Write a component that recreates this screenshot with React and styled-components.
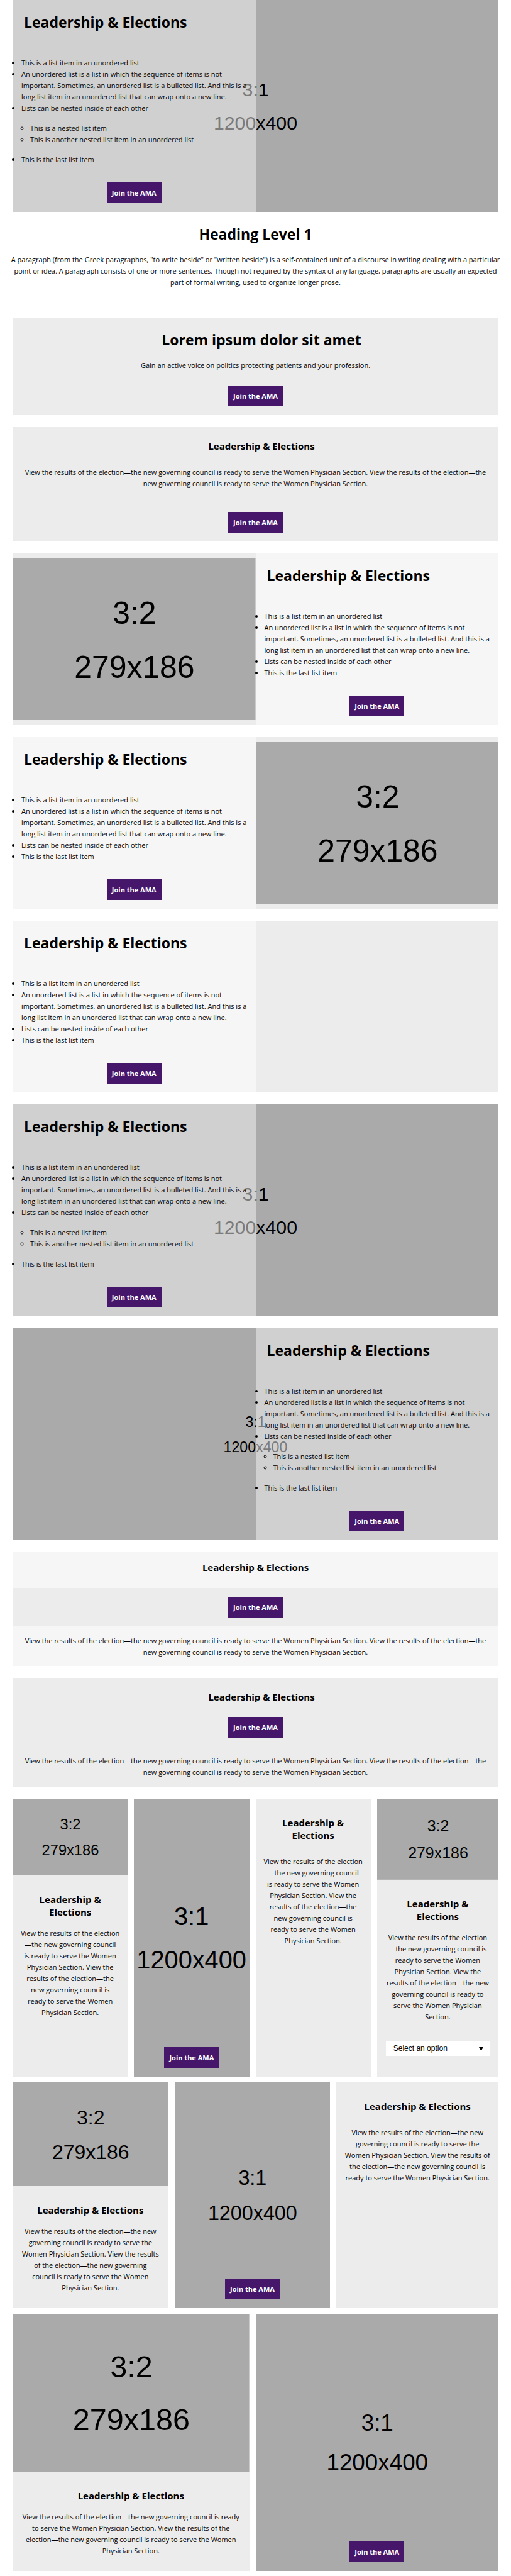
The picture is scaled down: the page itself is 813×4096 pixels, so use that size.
import React from "react";
import styled, { createGlobalStyle } from "styled-components";

const GlobalStyle = createGlobalStyle`
  *, *::before, *::after { box-sizing: border-box; }
  body {
    margin: 0;
    background: #fff;
    color: #000;
    font-family: "Open Sans", "Liberation Sans", sans-serif;
    font-size: 11px;
    line-height: 18px;
  }
  h1, h2, h3, p, ul { margin: 0; }
`;

const Page = styled.main`
  padding: 0 20px 8px;
`;

const Stack = styled.div`
  display: flex;
  flex-direction: column;
  gap: 19px;
`;

const TileGrid = styled.div`
  display: flex;
  flex-direction: column;
  gap: 9px;
`;

const Intro = styled.header`
  margin: 0 -3px;
  padding: 20px 0 28px;
  text-align: center;
`;

const PageTitle = styled.h1`
  margin-bottom: 17px;
  font-size: 23px;
  line-height: 30px;
`;

const Rule = styled.hr`
  height: 1px;
  margin: 0 0 19px;
  border: 0;
  background: #808080;
`;

const Button = styled.a`
  display: inline-block;
  padding: 0 8px;
  background: #46166b;
  color: #fff;
  font-weight: 700;
  line-height: 33px;
  text-align: center;
  text-decoration: none;
  white-space: nowrap;
`;

/* Two-column feature with text on one side and artwork on the other */
const FeatureBox = styled.section`
  position: relative;
  display: grid;
  grid-template-columns: 1fr 1fr;
  background: ${(p) => (p.$backdrop ? "#aaa" : "#ececec")};
`;

const Backdrop = styled.div`
  position: absolute;
  inset: 0;
`;

const FeaturePanel = styled.div`
  position: relative;
  grid-column: ${(p) => (p.$side === "right" ? 2 : 1)};
  grid-row: 1;
  display: flex;
  flex-direction: column;
  padding: 20px 0 14px;
  background: ${(p) => (p.$clear ? "rgba(246, 246, 246, 0.5)" : "#f6f6f6")};
`;

const FeatureMedia = styled.div`
  grid-column: ${(p) => (p.$side === "right" ? 1 : 2)};
  grid-row: 1;
  display: flex;
  align-items: center;
`;

const FeatureTitle = styled.h2`
  margin-bottom: 41px;
  padding-left: 18px;
  font-size: 23px;
  line-height: 30px;
`;

const List = styled.ul`
  padding-left: 14px;
  list-style: disc;
`;

const NestedList = styled(List)`
  margin: 14px 0;
  list-style: circle;
`;

const ButtonRow = styled.div`
  display: flex;
  justify-content: center;
  margin-top: ${(p) => p.$gap || 0}px;
`;

/* Full-width centred card */
const Banner = styled.section`
  padding: ${(p) => p.$top || 20}px 0 14px;
  background: #ececec;
  text-align: center;
`;

const BannerHeadline = styled.h2`
  padding-left: 19px;
  margin-bottom: 14px;
  font-size: 23px;
  line-height: 36px;
`;

const BannerTitle = styled.h3`
  padding-left: ${(p) => (p.$inset ? 19 : 0)}px;
  font-size: 15px;
  line-height: 20px;
`;

const BannerText = styled.p`
  padding: 0 14px;
  margin-top: ${(p) => p.$gap || 0}px;
`;

const Striped = styled.section`
  background: #f6f6f6;
  text-align: center;
`;

const Strip = styled.div`
  padding: ${(p) => p.$pad};
  background: ${(p) => (p.$dark ? "#ececec" : "transparent")};
`;

/* Equal columns; every tile but the last leaves a gutter on its right */
const TileRow = styled.div`
  display: grid;
  grid-template-columns: repeat(${(p) => p.$columns}, 1fr);
`;

const Tile = styled.article`
  position: relative;
  display: flex;
  flex-direction: column;
  margin-right: 10px;
  background: ${(p) => (p.$filled ? "#aaa" : "#ececec")};
  text-align: center;

  &:last-child { margin-right: 0; }
`;

const TileBody = styled.div`
  padding: 28px 12px 23px;
`;

const TileTitle = styled.h3`
  margin-bottom: ${(p) => (p.$roomy ? 23 : 15)}px;
  padding: 0 20px;
  font-size: 15px;
  line-height: 20px;
`;

const TileAction = styled.div`
  position: relative;
  margin-top: auto;
  padding-bottom: 14px;
`;

const SelectWrap = styled.div`
  position: relative;
  margin: 29px 2px 10px;
`;

const Select = styled.select`
  appearance: none;
  display: block;
  width: 100%;
  height: 24px;
  padding: 0 12px;
  border: 0;
  border-radius: 0;
  background: #fff;
  color: #000;
  font-family: "Liberation Sans", sans-serif;
  font-size: 12px;
`;

const Caret = styled.svg`
  position: absolute;
  top: 10px;
  right: 10px;
  width: 7px;
  height: 6px;
  pointer-events: none;
`;

const Art = styled.svg`
  display: block;
  width: 100%;
  height: ${(p) => (p.$fill ? "100%" : "auto")};
  font-family: "Liberation Sans", sans-serif;
  font-size: 36px;
  text-anchor: middle;
`;

function Wide({ fit = "slice" }) {
  return (
    <Art $fill viewBox="0 0 1200 400" preserveAspectRatio={`xMidYMid ${fit}`} role="img" aria-label="3:1 placeholder">
      <rect width="1200" height="400" fill="#aaa" />
      <text x="600" y="182">3:1</text>
      <text x="600" y="244">1200x400</text>
    </Art>
  );
}

function Photo() {
  return (
    <Art viewBox="0 0 279 186" role="img" aria-label="3:2 placeholder">
      <rect width="279" height="186" fill="#aaa" />
      <text x="140" y="75">3:2</text>
      <text x="140" y="137">279x186</text>
    </Art>
  );
}

const Join = () => <Button href="#join">Join the AMA</Button>;

const OPENING = "View the results of the election—\u2060the new governing council is ready to serve the Women Physician Section.";
const CLOSING =
  "View the results of the election—\u2060the new governing council\u00a0is ready\u00a0to serve the Women Physician Section.";
const COPY_LOOSE = `${OPENING} ${CLOSING}`;
const COPY = `${OPENING.replace("is ready", "is\u00a0ready")} ${CLOSING}`;
const TITLE = "Leadership & Elections";

function Feature({ side = "left", nested, backdrop, photo }) {
  return (
    <FeatureBox $backdrop={backdrop}>
      {backdrop && (
        <Backdrop>
          <Wide fit={backdrop} />
        </Backdrop>
      )}
      <FeaturePanel $side={side} $clear={Boolean(backdrop)}>
        <FeatureTitle>{TITLE}</FeatureTitle>
        <List>
          <li>This is a list item in an unordered list</li>
          <li>
            An unordered list is a list in which the sequence of items is not important. Sometimes, an
            unordered list is a bulleted list. And this is a long list item in an unordered list that can
            wrap onto a new line.
          </li>
          <li>
            Lists can be nested inside of each other
            {nested && (
              <NestedList>
                <li>This is a nested list item</li>
                <li>This is another nested list item in an unordered list</li>
              </NestedList>
            )}
          </li>
          <li>This is the last list item</li>
        </List>
        <ButtonRow $gap={27}>
          <Join />
        </ButtonRow>
      </FeaturePanel>
      {photo && (
        <FeatureMedia $side={side}>
          <Photo />
        </FeatureMedia>
      )}
    </FeatureBox>
  );
}

function CopyTile({ photo, select }) {
  return (
    <Tile>
      {photo && <Photo />}
      <TileBody>
        <TileTitle $roomy={!photo}>{TITLE}</TileTitle>
        <p>{select ? COPY_LOOSE : COPY}</p>
        {select && (
          <SelectWrap>
            <Select aria-label="Option" defaultValue="">
              <option value="">Select an option</option>
            </Select>
            <Caret viewBox="0 0 7 6" aria-hidden="true">
              <path d="M0 0h7L3.500 6z" />
            </Caret>
          </SelectWrap>
        )}
      </TileBody>
    </Tile>
  );
}

function PictureTile() {
  return (
    <Tile $filled>
      <Backdrop>
        <Wide />
      </Backdrop>
      <TileAction>
        <Join />
      </TileAction>
    </Tile>
  );
}

export default function App() {
  return (
    <>
      <GlobalStyle />
      <Page>
        <Feature nested backdrop="slice" />
        <Intro>
          <PageTitle>Heading Level 1</PageTitle>
          <p>
            A paragraph (from the Greek paragraphos, "to write beside" or "written beside") is a
            self-contained unit of a discourse in writing dealing with a particular point or idea. A
            paragraph consists of one or more sentences. Though not required by the syntax of any
            language, paragraphs are usually an expected part of formal writing, used to organize longer
            prose.
          </p>
        </Intro>
        <Rule />
        <Stack>
          <Banner $top={16}>
            <BannerHeadline>Lorem ipsum dolor sit amet</BannerHeadline>
            <BannerText>Gain an active voice on politics protecting patients and your profession.</BannerText>
            <ButtonRow $gap={23}>
              <Join />
            </ButtonRow>
          </Banner>
          <Banner>
            <BannerTitle $inset>{TITLE}</BannerTitle>
            <BannerText $gap={23}>{COPY}</BannerText>
            <ButtonRow $gap={36}>
              <Join />
            </ButtonRow>
          </Banner>
          <Feature side="right" photo />
          <Feature photo />
          <Feature />
          <Feature nested backdrop="slice" />
          <Feature side="right" nested backdrop="meet" />
          <Striped>
            <Strip $pad="14px 0 23px">
              <BannerTitle>{TITLE}</BannerTitle>
            </Strip>
            <Strip $dark $pad="14px 0 13px">
              <ButtonRow>
                <Join />
              </ButtonRow>
            </Strip>
            <Strip $pad="15px 0 13px">
              <BannerText>{COPY}</BannerText>
            </Strip>
          </Striped>
          <Banner>
            <BannerTitle $inset>{TITLE}</BannerTitle>
            <ButtonRow $gap={22}>
              <Join />
            </ButtonRow>
            <BannerText $gap={28}>{COPY}</BannerText>
          </Banner>
          <TileGrid>
            <TileRow $columns={4}>
              <CopyTile photo />
              <PictureTile />
              <CopyTile />
              <CopyTile photo select />
            </TileRow>
            <TileRow $columns={3}>
              <CopyTile photo />
              <PictureTile />
              <CopyTile />
            </TileRow>
            <TileRow $columns={2}>
              <CopyTile photo />
              <PictureTile />
            </TileRow>
          </TileGrid>
        </Stack>
      </Page>
    </>
  );
}
